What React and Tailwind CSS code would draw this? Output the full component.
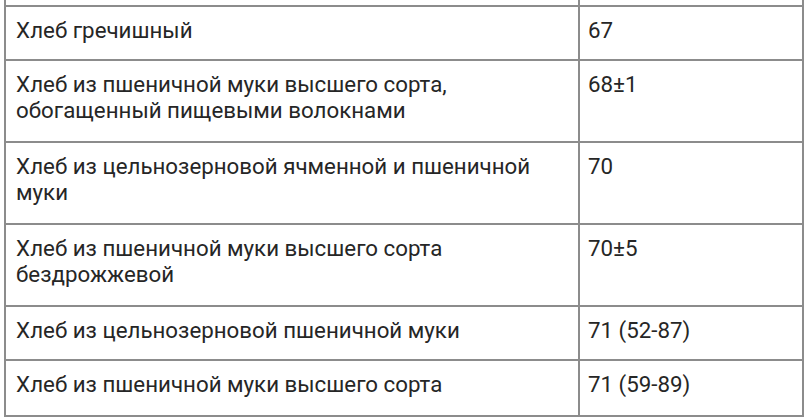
const rows = [
  { name: ['Хлеб гречишный'], gi: '67' },
  { name: ['Хлеб из пшеничной муки высшего сорта,', 'обогащенный пищевыми волокнами'], gi: '68±1' },
  { name: ['Хлеб из цельнозерновой ячменной и пшеничной', 'муки'], gi: '70' },
  { name: ['Хлеб из пшеничной муки высшего сорта', 'бездрожжевой'], gi: '70±5' },
  { name: ['Хлеб из цельнозерновой пшеничной муки'], gi: '71 (52-87)' },
  { name: ['Хлеб из пшеничной муки высшего сорта'], gi: '71 (59-89)' },
];

export default function App() {
  return (
    <div className="w-[807px] h-[419px] overflow-hidden bg-white pl-[4px] font-['Roboto',sans-serif] text-[22.3px] leading-[26px] text-[#262626]">
      <div className="w-[800px] border-x-2 border-b-2 border-[#8c8c8c]">
        {/* tail of the row above */}
        <div className="flex h-[7px] border-b-2 border-[#8c8c8c]">
          <div className="w-[574px] border-r-2 border-[#8c8c8c]" />
          <div className="flex-1" />
        </div>

        {rows.map((row, i) => (
          <div
            key={i}
            className={
              'flex border-[#8c8c8c] ' +
              (i < rows.length - 1 ? 'border-b-2 ' : '') +
              (row.name.length > 1 ? 'h-[82px]' : 'h-[54px]')
            }
          >
            <div className="w-[574px] border-r-2 border-[#8c8c8c] pl-[10px] pt-[10px]">
              {row.name.map((line, j) => (
                <div key={j}>{line}</div>
              ))}
            </div>
            <div className="flex-1 pl-[8px] pt-[10px]">{row.gi}</div>
          </div>
        ))}
      </div>
    </div>
  );
}
